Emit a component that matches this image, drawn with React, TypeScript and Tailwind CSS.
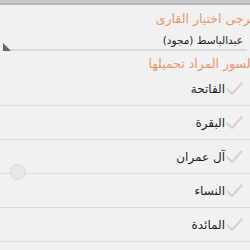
const suras = ["الفاتحة", "البقرة", "آل عمران", "النساء", "المائدة"];

function Check() {
  return (
    <svg width="17" height="14" viewBox="0 0 17 14" className="shrink-0">
      <path d="M1.5 7.5 L6 12 L15.5 1.5" fill="none" stroke="#d4d4d4" strokeWidth="2.4" strokeLinecap="round" strokeLinejoin="round" />
    </svg>
  );
}

export default function App() {
  return (
    <div
      dir="rtl"
      className="relative h-[250px] w-[250px] overflow-hidden bg-[#f1f1f1]"
      style={{ fontFamily: '"DejaVu Sans", sans-serif' }}
    >
      {/* شريط علوي */}
      <div className="h-[5px] border-b-2 border-[#b9b9b9] bg-[#c9c9c9]" />

      {/* القارئ */}
      <div className="-mr-[4px] pt-[4px] text-[12.5px] leading-[20px] text-[#e9966b]">يرجى اختيار القارى</div>
      <div className="relative mx-[3px] mt-[4px] h-[18px] border-b-2 border-[#d9d9d9] pr-[4px] text-[10.5px] leading-[15px] text-[#222]">
        عبدالباسط (مجود)
        <div className="absolute -bottom-[2px] left-0 h-0 w-0 border-b-[8px] border-r-[8px] border-b-[#666] border-r-transparent" />
      </div>

      {/* السور */}
      <div className="-mr-[4px] mt-[4px] text-[12.5px] leading-[18px] text-[#e9966b]">السور المراد تحميلها</div>

      <div className="-mt-[1px]">
        {suras.map((s) => (
          <div key={s} className="flex h-[34px] items-center gap-[1px] border-b border-[#dcdcdc] pr-[7px]">
            <Check />
            <span className="text-[12px] text-[#1e1e1e]">{s}</span>
          </div>
        ))}
      </div>

      <div className="absolute left-[10px] top-[164px] h-[16px] w-[16px] rounded-full border border-[#d4d4f2] bg-[#e8e8e8]" />
    </div>
  );
}
